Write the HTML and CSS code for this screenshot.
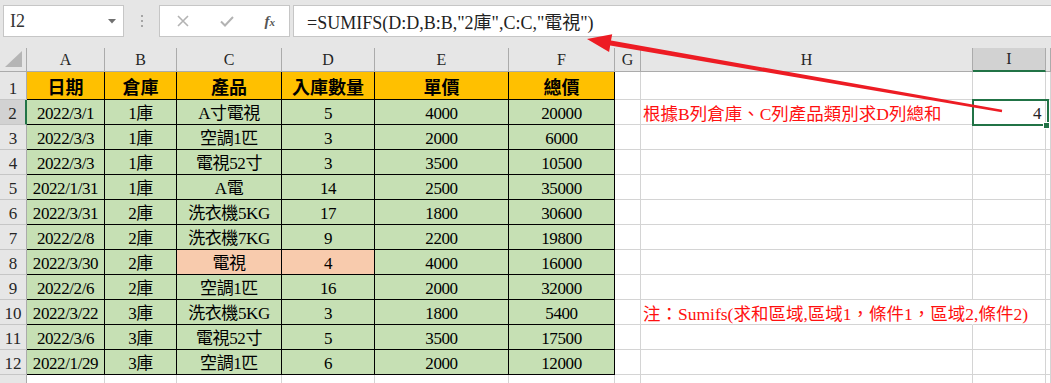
FILE: index.html
```html
<!DOCTYPE html>
<html lang="zh-Hant">
<head>
  <meta charset="UTF-8">
  <title>SUMIFS</title>
  <link rel="stylesheet" href="styles.css">
</head>
<body>

  <div class="toolbar">
    <div class="namebox">
      <span>I2</span>
      <svg class="caret" width="8" height="5" viewBox="0 0 8 5"><path d="M0 0h8L4 4.5z" fill="#707070"/></svg>
    </div>
    <div class="grip"><i></i><i></i><i></i></div>
    <div class="fxbox">
      <svg width="12" height="12" viewBox="0 0 12 12"><path d="M1 1l10 10M11 1L1 11" stroke="#b3b3b3" stroke-width="1.6"/></svg>
      <svg width="14" height="11" viewBox="0 0 14 11"><path d="M1 5.5l4 4L13 1" stroke="#b3b3b3" stroke-width="2" fill="none"/></svg>
      <span class="fx">f<small>x</small></span>
    </div>
    <div class="formula">=SUMIFS(D:D,B:B,"2庫",C:C,"電視")</div>
  </div>

  <div class="sheet">
    <!-- column headers -->
    <div class="hd corner"><svg width="17" height="16" viewBox="0 0 17 16"><path d="M17 0v16H0z" fill="#b5b5b5"/></svg></div>
    <div class="hd">A</div><div class="hd">B</div><div class="hd">C</div><div class="hd">D</div>
    <div class="hd">E</div><div class="hd">F</div><div class="hd">G</div><div class="hd">H</div>
    <div class="hd hd-sel">I</div><div class="hd"></div>

    <!-- row 1 -->
    <div class="rh">1</div>
    <div class="t o">日期</div><div class="t o">倉庫</div><div class="t o">產品</div>
    <div class="t o">入庫數量</div><div class="t o">單價</div><div class="t o">總價</div>
    <div></div><div></div><div></div><div></div>

    <!-- row 2 -->
    <div class="rh rh-sel">2</div>
    <div class="t g">2022/3/1</div><div class="t g">1庫</div><div class="t g">A寸電視</div>
    <div class="t g">5</div><div class="t g">4000</div><div class="t g">20000</div>
    <div></div><div class="note">根據B列倉庫、C列產品類別求D列總和</div>
    <div class="num active">4<span class="selbox"><b></b></span></div><div></div>

    <!-- row 3 -->
    <div class="rh">3</div>
    <div class="t g">2022/3/3</div><div class="t g">1庫</div><div class="t g">空調1匹</div>
    <div class="t g">3</div><div class="t g">2000</div><div class="t g">6000</div>
    <div></div><div></div><div></div><div></div>

    <!-- row 4 -->
    <div class="rh">4</div>
    <div class="t g">2022/3/3</div><div class="t g">1庫</div><div class="t g">電視52寸</div>
    <div class="t g">3</div><div class="t g">3500</div><div class="t g">10500</div>
    <div></div><div></div><div></div><div></div>

    <!-- row 5 -->
    <div class="rh">5</div>
    <div class="t g">2022/1/31</div><div class="t g">1庫</div><div class="t g">A電</div>
    <div class="t g">14</div><div class="t g">2500</div><div class="t g">35000</div>
    <div></div><div></div><div></div><div></div>

    <!-- row 6 -->
    <div class="rh">6</div>
    <div class="t g">2022/3/31</div><div class="t g">2庫</div><div class="t g">洗衣機5KG</div>
    <div class="t g">17</div><div class="t g">1800</div><div class="t g">30600</div>
    <div></div><div></div><div></div><div></div>

    <!-- row 7 -->
    <div class="rh">7</div>
    <div class="t g">2022/2/8</div><div class="t g">2庫</div><div class="t g">洗衣機7KG</div>
    <div class="t g">9</div><div class="t g">2200</div><div class="t g">19800</div>
    <div></div><div></div><div></div><div></div>

    <!-- row 8 -->
    <div class="rh">8</div>
    <div class="t g">2022/3/30</div><div class="t g">2庫</div><div class="t s">電視</div>
    <div class="t s">4</div><div class="t g">4000</div><div class="t g">16000</div>
    <div></div><div></div><div></div><div></div>

    <!-- row 9 -->
    <div class="rh">9</div>
    <div class="t g">2022/2/6</div><div class="t g">2庫</div><div class="t g">空調1匹</div>
    <div class="t g">16</div><div class="t g">2000</div><div class="t g">32000</div>
    <div></div><div></div><div></div><div></div>

    <!-- row 10 -->
    <div class="rh">10</div>
    <div class="t g">2022/3/22</div><div class="t g">3庫</div><div class="t g">洗衣機5KG</div>
    <div class="t g">3</div><div class="t g">1800</div><div class="t g">5400</div>
    <div></div><div class="note spill">注：Sumifs(求和區域,區域1，條件1，區域2,條件2)</div>
    <div></div><div></div>

    <!-- row 11 -->
    <div class="rh">11</div>
    <div class="t g">2022/3/6</div><div class="t g">3庫</div><div class="t g">電視52寸</div>
    <div class="t g">5</div><div class="t g">3500</div><div class="t g">17500</div>
    <div></div><div></div><div></div><div></div>

    <!-- row 12 -->
    <div class="rh">12</div>
    <div class="t g">2022/1/29</div><div class="t g">3庫</div><div class="t g">空調1匹</div>
    <div class="t g">6</div><div class="t g">2000</div><div class="t g">12000</div>
    <div></div><div></div><div></div><div></div>

    <!-- row 13 (cut off below the window) -->
    <div class="rh"></div>
    <div></div><div></div><div></div><div></div><div></div><div></div>
    <div></div><div></div><div></div><div></div>
  </div>

  <!-- red callout arrow from I2 to the formula -->
  <svg class="arrow" width="1051" height="383" viewBox="0 0 1051 383">
    <polygon points="587,39 612.2,34.2 611,40.6 1002.2,109.7 1001.8,112.3 610.2,45.6 609.1,52" fill="#ed1c24"/>
  </svg>

</body>
</html>
```

FILE: styles.css
```css
/* General */
body {
  margin: 0;
  background-color: #ffffff;
  font-family: "Liberation Serif", "Noto Sans CJK TC", serif;
  color: #000;
  overflow: hidden;
}

/* Formula bar */
.toolbar {
  display: flex;
  align-items: flex-start;
  height: 48px;
  box-sizing: border-box;
  padding: 5px 0 0 3px;
  background-color: #e6e6e6;
}

.namebox,
.fxbox,
.formula {
  height: 32px;
  box-sizing: border-box;
  background-color: #fff;
  border: 1px solid #c6c6c6;
  display: flex;
  align-items: center;
}

.namebox {
  width: 121px;
  padding: 0 7px 0 6px;
  justify-content: space-between;
  font-size: 18px;
  color: #333;
}

.grip {
  width: 35px;
  height: 32px;
  display: flex;
  flex-direction: column;
  align-items: center;
  justify-content: center;
  gap: 3px;
}

.grip i {
  width: 2px;
  height: 2px;
  background-color: #a5a5a5;
}

.fxbox {
  width: 131px;
  padding: 0 14px 0 17px;
  justify-content: space-between;
}

.fx {
  font-style: italic;
  font-size: 15px;
  color: #555;
  font-weight: bold;
}

.fx small {
  font-size: 11px;
}

.formula {
  flex: 1;
  margin-left: 3px;
  border-right: none;
  padding-left: 13px;
  font-size: 18px;
  color: #222;
}

/* Sheet grid */
.sheet {
  display: grid;
  grid-template-columns: 27px 78px 72px 105px 93px 134px 106px 26px 332px 73px 1fr;
  grid-template-rows: 24px 28px;
  grid-auto-rows: 25px;
}

.sheet > div {
  box-sizing: border-box;
  border-right: 1px solid #d4d4d4;
  border-bottom: 1px solid #d4d4d4;
  display: flex;
  align-items: flex-end;
  justify-content: center;
  white-space: nowrap;
  font-size: 17px;
  letter-spacing: -0.4px;
  line-height: 20px;
}

.sheet > .hd {
  background-color: #e6e6e6;
  border-right-color: #ababab;
  border-bottom-color: #ababab;
  align-items: center;
  font-size: 16px;
  letter-spacing: 0;
  color: #262626;
}

.sheet > .corner {
  align-items: flex-end;
  justify-content: flex-end;
  padding: 0 4px 4px 0;
}

.sheet > .hd-sel {
  background-color: #d2d2d2;
  border-bottom: 2px solid #217346;
}

.sheet > .rh {
  background-color: #e6e6e6;
  border-right-color: #ababab;
  border-bottom-color: #c6c6c6;
  letter-spacing: 0;
  font-size: 17px;
  color: #262626;
}

.sheet > .rh-sel {
  background-color: #d2d2d2;
  border-right: 2px solid #217346;
}

/* Data table */
.sheet > .t {
  border-color: #000;
}

.sheet > .o {
  background-color: #ffc000;
  font-weight: bold;
  font-size: 18px;
  letter-spacing: 0;
  padding-bottom: 1px;
}

.sheet > .g {
  background-color: #c6e0b4;
}

.sheet > .s {
  background-color: #f8cbad;
}

/* Notes */
.sheet > .note {
  justify-content: flex-start;
  padding-left: 2px;
  color: #ff1010;
  font-size: 17.5px;
  letter-spacing: 0;
  overflow: visible;
}

.sheet > .spill {
  border-right-color: transparent;
}

/* Active cell */
.sheet > .num {
  justify-content: flex-end;
  padding-right: 4px;
  color: #222;
}

.active {
  position: relative;
}

.selbox {
  position: absolute;
  left: -1px;
  top: -1px;
  width: 77px;
  height: 27px;
  box-sizing: border-box;
  border: 2px solid #217346;
}

.selbox b {
  position: absolute;
  left: 69px;
  top: 21px;
  width: 7px;
  height: 7px;
  box-sizing: border-box;
  background-color: #217346;
  border: 1px solid #fff;
}

.arrow {
  position: absolute;
  top: 0;
  left: 0;
  pointer-events: none;
}
```
